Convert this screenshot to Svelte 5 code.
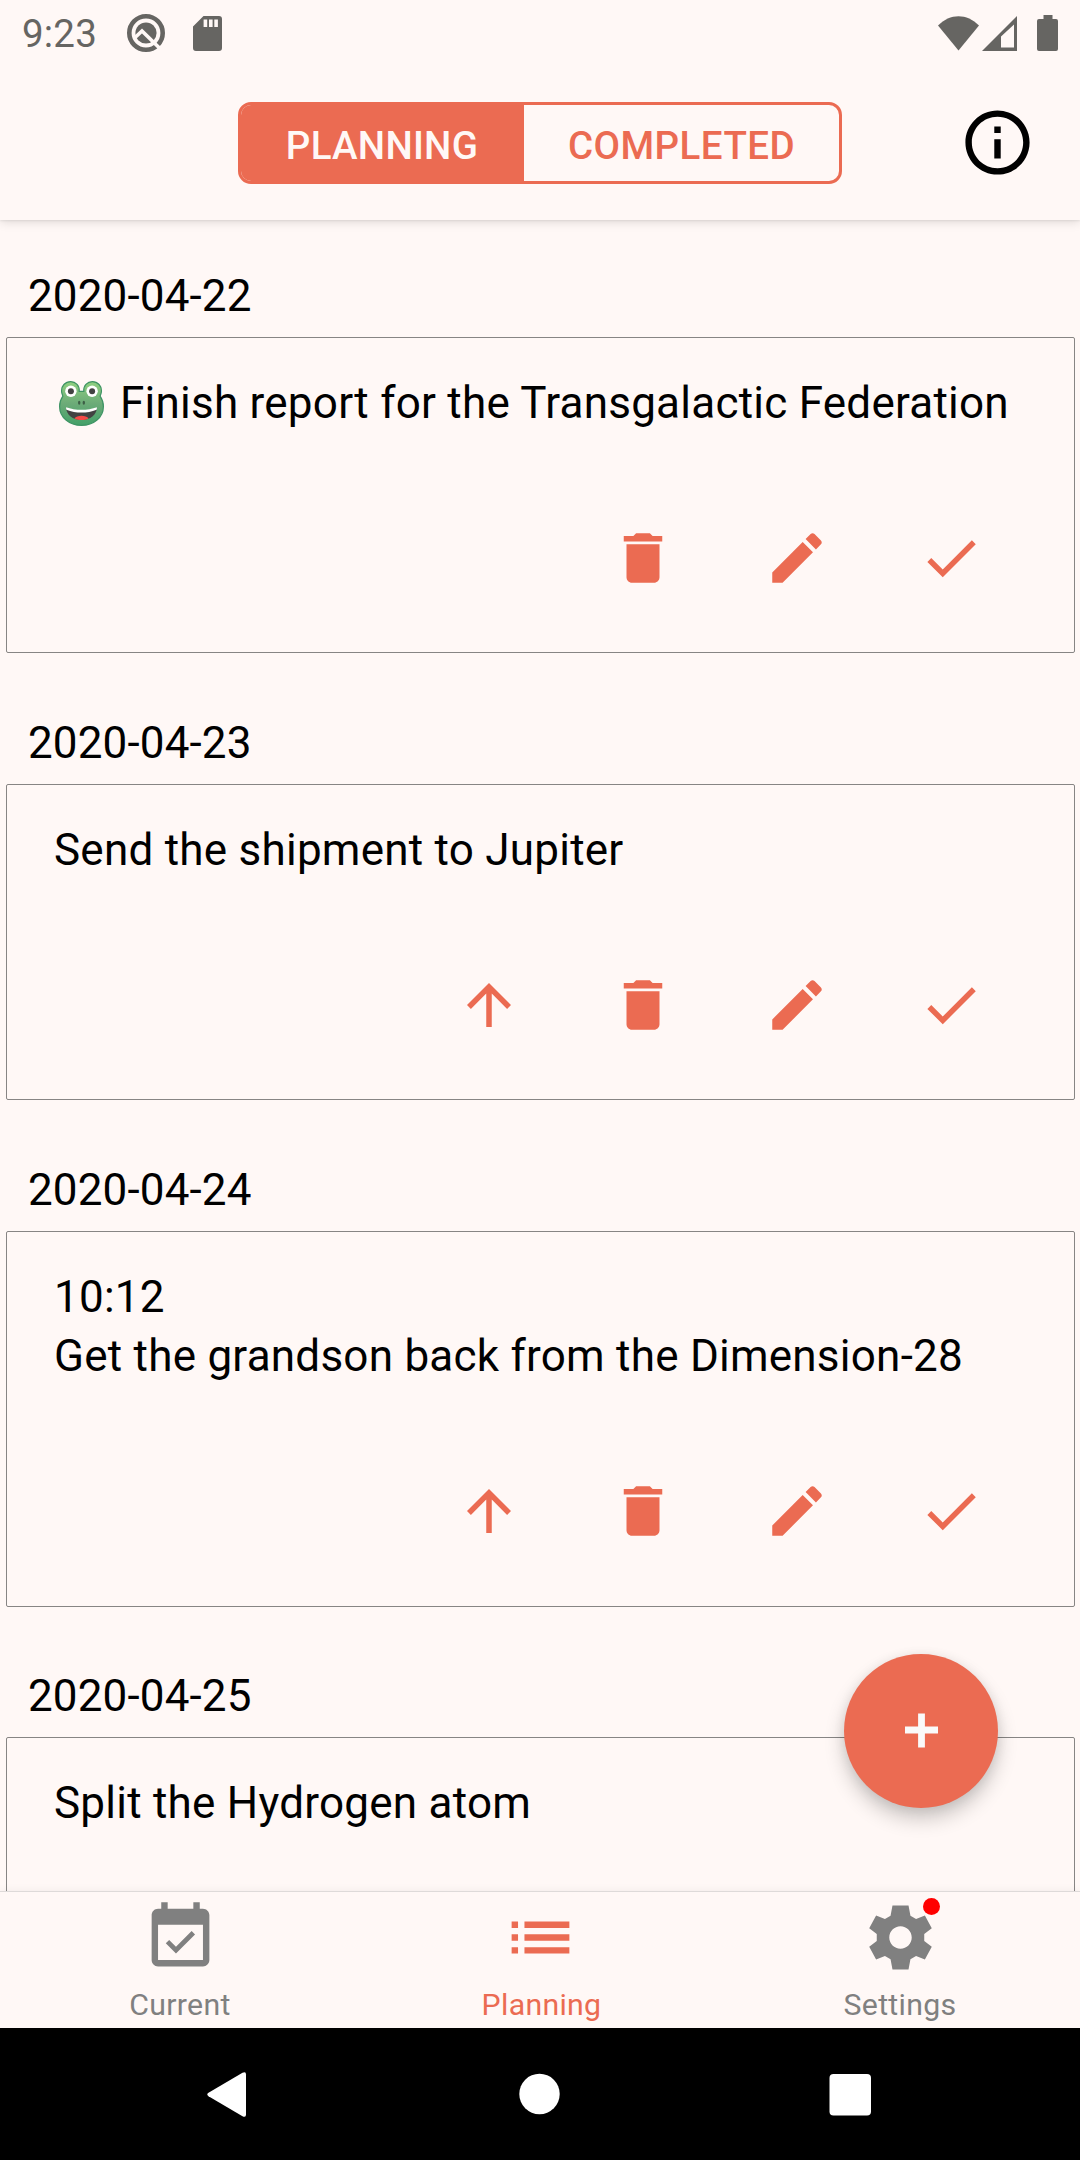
<script>
  const icons = {
    up: 'M4 12l1.41 1.41L11 7.83V20h2V7.83l5.58 5.59L20 12l-8-8-8 8z',
    trash: 'M6 19c0 1.1.9 2 2 2h8c1.1 0 2-.9 2-2V7H6v12zM19 4h-3.5l-1-1h-5l-1 1H5v2h14V4z',
    edit: 'M3 17.25V21h3.75L17.81 9.94l-3.75-3.75L3 17.25zM20.71 7.04c.39-.39.39-1.02 0-1.41l-2.34-2.34c-.39-.39-1.02-.39-1.41 0l-1.83 1.83 3.75 3.75 1.83-1.83z',
    check: 'M9 16.17L4.83 12l-1.42 1.41L9 19 21 7l-1.41-1.41L9 16.17z',
    info: 'M11 17h2v-6h-2v6zm1-15C6.48 2 2 6.48 2 12s4.48 10 10 10 10-4.48 10-10S17.52 2 12 2zm0 18c-4.41 0-8-3.59-8-8s3.59-8 8-8 8 3.59 8 8-3.59 8-8 8zM11 9h2V7h-2v2z',
    calendar: 'M16.53 11.06L15.47 10l-4.88 4.88-2.12-2.12-1.06 1.06L10.59 17l5.94-5.94zM19 3h-1V1h-2v2H8V1H6v2H5c-1.11 0-1.99.9-1.99 2L3 19c0 1.1.89 2 2 2h14c1.1 0 2-.9 2-2V5c0-1.1-.9-2-2-2zm0 16H5V8h14v11z',
    list: 'M3 13h2v-2H3v2zm0 4h2v-2H3v2zm0-8h2V7H3v2zm4 4h14v-2H7v2zm0 4h14v-2H7v2zM7 7v2h14V7H7z',
    settings: 'M19.4 13.1V10.9L21.75 9.1L19.6 5.15L16.85 6.2L15.1 5.2L14.5 2H9.5L8.9 5.2L7.15 6.2L4.4 5.15L2.25 9.1L4.6 10.9V13.1L2.25 14.9L4.4 18.85L7.15 17.8L8.9 18.8L9.5 22H14.5L15.1 18.8L16.85 17.8L19.6 18.85L21.75 14.9zM12 15.5c-1.93 0-3.5-1.57-3.5-3.5s1.57-3.5 3.5-3.5 3.5 1.57 3.5 3.5-1.57 3.5-3.5 3.5z'
  };

  const days = [
    { date: '2020-04-22', title: 'Finish report for the Transgalactic Federation', frog: true, actions: ['trash', 'edit', 'check'] },
    { date: '2020-04-23', title: 'Send the shipment to Jupiter', actions: ['up', 'trash', 'edit', 'check'] },
    { date: '2020-04-24', time: '10:12', title: 'Get the grandson back from the Dimension-28', actions: ['up', 'trash', 'edit', 'check'] },
    { date: '2020-04-25', title: 'Split the Hydrogen atom', actions: ['up', 'trash', 'edit', 'check'] }
  ];

  const tabs = [
    { label: 'Current', icon: 'calendar' },
    { label: 'Planning', icon: 'list', active: true },
    { label: 'Settings', icon: 'settings', badge: true }
  ];
</script>

{#snippet icon(name)}
  <svg class="icon" viewBox="0 0 24 24" aria-hidden="true"><path fill-rule="evenodd" d={icons[name]} /></svg>
{/snippet}

<div class="screen">
  <div class="status">
    <span class="clock">9:23</span>
    <svg class="q-icon" viewBox="0 0 40 40">
      <circle cx="20" cy="20" r="16.7" fill="none" stroke="currentColor" stroke-width="4.6" />
      <circle cx="20" cy="20" r="10.6" fill="currentColor" />
      <path class="cut" d="M8 25.5L16 18L35 36.5" />
    </svg>
    <svg class="sd-icon" viewBox="0 0 29 35">
      <path fill-rule="evenodd" d="M10.5 0H26a3 3 0 0 1 3 3V32a3 3 0 0 1-3 3H3a3 3 0 0 1-3-3V10.5zM10.6 3.5v7.4h3.6V3.5zM16 3.5v7.4h3.6V3.5zM21.3 3.5v7.4h3.6V3.5z" />
    </svg>
    <span class="spacer"></span>
    <svg class="wifi-icon" viewBox="0 0 41 35"><path d="M0 9.5C12-3 29-3 41 9.5L20.5 34.5z" /></svg>
    <svg class="cell-icon" viewBox="0 0 35 35">
      <path fill-rule="evenodd" d="M35 0V35H0zM32 8.5L19 20.5V31.5H32z" />
    </svg>
    <svg class="battery-icon" viewBox="0 0 21 36">
      <path d="M6.5 0h9v4H19a2 2 0 0 1 2 2V34a2 2 0 0 1-2 2H2a2 2 0 0 1-2-2V6a2 2 0 0 1 2-2h4.5z" />
    </svg>
  </div>

  <header>
    <div class="segments">
      <button class="segment selected">PLANNING</button>
      <button class="segment">COMPLETED</button>
    </div>
    <button class="info" aria-label="Information">{@render icon('info')}</button>
  </header>

  <main>
    {#each days as day}
      <section>
        <h2>{day.date}</h2>
        <article>
          {#if day.time}<p>{day.time}</p>{/if}
          <p class:with-frog={day.frog}>
            {#if day.frog}
              <svg class="frog" viewBox="0 0 45 45" role="img" aria-label="Frog">
                <defs>
                  <linearGradient id="skin" x1="0" y1="0" x2="0" y2="1">
                    <stop offset="0" stop-color="#8fd080" />
                    <stop offset="0.5" stop-color="#6cab78" />
                    <stop offset="1" stop-color="#43a068" />
                  </linearGradient>
                </defs>
                <path fill="url(#skin)" stroke="#3f9465" stroke-width="1.2" d="M22.5 10.3h2.3C24.2 5 28.3.6 33.3.6c5.5 0 9.5 4.5 9.2 9.4-.1 2.3-.8 3.8-1.4 5.2 2.1 3 3.3 6.5 3.3 10.3C44.4 36.5 34.7 44.4 22.5 44.4S.6 36.5.6 25.5c0-3.8 1.2-7.3 3.3-10.3C3.3 13.8 2.6 12.3 2.5 10 2.2 5.1 6.2.6 11.7.6c5 0 9.1 4.4 8.5 9.7z" />
                <circle cx="11.9" cy="10.2" r="5.7" fill="#fff" />
                <circle cx="33.1" cy="10.2" r="5.7" fill="#fff" />
                <circle cx="11.9" cy="10.2" r="3" fill="#424242" />
                <circle cx="33.1" cy="10.2" r="3" fill="#424242" />
                <ellipse cx="20.2" cy="21.8" rx="1.2" ry="2" fill="#3d5f46" />
                <ellipse cx="24.8" cy="21.8" rx="1.2" ry="2" fill="#3d5f46" />
                <path fill="#424242" d="M7 26.5C17 30.6 28 30.6 38 26.5 37.5 34 31.5 39 22.5 39S7.5 34 7 26.5z" />
                <path fill="#fff" d="M7 26.3C17 29.7 28 29.7 38 26.3c0 1-.1 1.7-.4 2.4C28 32.5 17 32.5 7.4 28.7 7.1 28 7 27.3 7 26.3z" />
                <path fill="#f44a47" d="M15.5 37.4c2-3.7 12-3.7 14 0-4 2-10 2-14 0z" />
              </svg>
            {/if}
            <span>{day.title}</span>
          </p>
          <div class="actions">
            {#each day.actions as action}
              <button class="action" aria-label={action}>{@render icon(action)}</button>
            {/each}
          </div>
        </article>
      </section>
    {/each}
  </main>

  <nav class="tabs">
    {#each tabs as tab}
      <button class="tab" class:active={tab.active}>
        <span class="tab-icon">
          {@render icon(tab.icon)}
          {#if tab.badge}<i class="badge"></i>{/if}
        </span>
        <span class="tab-label">{tab.label}</span>
      </button>
    {/each}
  </nav>

  <div class="system-nav">
    <svg viewBox="0 0 45 45"><path d="M36.5.8Q40 -1 40 2.5V42.5Q40 46 36.5 44.2L2.5 24.2Q0 22.5 2.5 20.8z" /></svg>
    <svg viewBox="0 0 45 45"><circle cx="22.5" cy="22" r="20.2" /></svg>
    <svg viewBox="0 0 45 45"><rect x="1.5" y="2" width="41.5" height="41.5" rx="4" /></svg>
  </div>

  <button class="fab" aria-label="Add task">
    <svg viewBox="0 0 34 35"><path d="M13.5 0h7v13.5H34v7H20.5V35h-7V20.5H0v-7h13.5z" /></svg>
  </button>
</div>

<style>
  :global(body) {
    margin: 0;
    background: #fff8f6;
  }

  .screen {
    position: relative;
    display: flex;
    flex-direction: column;
    width: 1080px;
    height: 2160px;
    overflow: hidden;
    background: #fff8f6;
    color: #000;
    font-family: Roboto, sans-serif;
  }

  button {
    margin: 0;
    padding: 0;
    border: 0;
    background: none;
    color: inherit;
    font: inherit;
    letter-spacing: inherit;
  }

  svg {
    display: block;
    flex: none;
    fill: currentColor;
  }

  .icon {
    width: 100%;
    height: 100%;
  }

  .status {
    display: flex;
    align-items: center;
    height: 66px;
    padding: 0 22px;
    box-sizing: border-box;
    color: #666562;
  }

  .clock {
    width: 104px;
    font-size: 38.5px;
    line-height: 66px;
    letter-spacing: 0.2px;
    padding-top: 2px;
  }

  .q-icon {
    width: 40px;
    height: 40px;
  }

  .cut {
    fill: none;
    stroke: #fff8f6;
    stroke-width: 3.6;
  }

  .sd-icon {
    width: 29px;
    height: 35px;
    margin-left: 27px;
  }

  .spacer {
    flex: 1;
  }

  .wifi-icon {
    width: 41px;
    height: 35px;
  }

  .cell-icon {
    width: 35px;
    height: 35px;
    margin-left: 3px;
  }

  .battery-icon {
    width: 21px;
    height: 36px;
    margin-left: 20px;
  }

  header {
    position: relative;
    z-index: 1;
    display: grid;
    grid-template-columns: 238px 604px 1fr;
    align-items: center;
    height: 154px;
    background: #fff8f6;
    box-shadow: 0 2px 10px rgba(0, 0, 0, 0.13), 0 1px 2px rgba(0, 0, 0, 0.07);
    clip-path: inset(0 0 -24px 0);
  }

  .segments {
    grid-column: 2;
    display: flex;
    height: 82px;
    box-sizing: border-box;
    border: 3px solid #eb6b52;
    border-radius: 13px;
    overflow: hidden;
    color: #eb6b52;
    font-size: 38.5px;
    font-weight: 500;
    letter-spacing: 0.45px;
  }

  .segment {
    flex: 1;
    padding-top: 4px;
  }

  .segment.selected {
    flex: 0 0 283px;
    padding-right: 1px;
    box-sizing: border-box;
    background: #eb6b52;
    color: #fff8f6;
    letter-spacing: 0.25px;
  }

  .info {
    justify-self: end;
    width: 77px;
    height: 77px;
    margin: 0 44px 1px 0;
  }

  main {
    flex: 1;
    min-height: 0;
    overflow: hidden;
  }

  section {
    margin-bottom: 13.98px;
  }

  h2 {
    margin: 0;
    padding: 49.8px 28px 14.8px;
    font-size: 44px;
    font-weight: 400;
    line-height: 52px;
    letter-spacing: 0.14px;
  }

  article {
    margin: 0 5px 0 6px;
    padding: 36.2px 90px 61.65px 47px;
    border: 1px solid #878584;
    border-radius: 2px;
  }

  p {
    margin: 0;
    font-size: 44px;
    line-height: 59px;
    letter-spacing: 0.24px;
    white-space: nowrap;
  }

  .with-frog {
    display: flex;
    align-items: center;
    gap: 16px;
    padding-left: 5px;
  }

  .frog {
    width: 45px;
    height: 45px;
  }

  .actions {
    display: flex;
    justify-content: flex-end;
    gap: 88px;
    margin-top: 91.8px;
    color: #eb6b52;
  }

  .action {
    width: 66px;
    height: 66px;
  }

  .tabs {
    position: relative;
    z-index: 1;
    display: grid;
    grid-template-columns: repeat(3, 1fr);
    height: 137px;
    box-sizing: border-box;
    border-top: 1px solid #dedad9;
    background: #fff8f6;
    box-shadow: 0 -1px 8px rgba(0, 0, 0, 0.05);
    color: #808080;
  }

  .tab {
    display: flex;
    flex-direction: column;
    align-items: center;
    padding-top: 7px;
  }

  .tab.active {
    color: #eb6b52;
  }

  .tab.active .tab-label {
    padding-left: 3px;
  }

  .tab-icon {
    position: relative;
    width: 77px;
    height: 77px;
  }

  .badge {
    position: absolute;
    top: -1px;
    right: -1px;
    width: 17px;
    height: 17px;
    border-radius: 50%;
    background: #f00;
  }

  .tab-label {
    margin-top: 11px;
    font-size: 30.25px;
    line-height: 36px;
    letter-spacing: 0.3px;
  }

  .system-nav {
    display: flex;
    justify-content: center;
    align-items: center;
    gap: 266px;
    height: 132px;
    background: #000;
    color: #fff;
    padding-right: 1px;
  }

  .system-nav svg {
    width: 45px;
    height: 45px;
  }

  .fab {
    position: absolute;
    z-index: 2;
    top: 1654px;
    left: 844px;
    display: grid;
    place-items: center;
    width: 154px;
    height: 154px;
    padding-bottom: 2px;
    box-sizing: border-box;
    border-radius: 50%;
    background: #eb6b52;
    color: #fafafa;
    box-shadow: 0 11px 20px rgba(0, 0, 0, 0.2), 0 2px 12px rgba(0, 0, 0, 0.08);
  }

  .fab svg {
    width: 33px;
    height: 35px;
  }
</style>
